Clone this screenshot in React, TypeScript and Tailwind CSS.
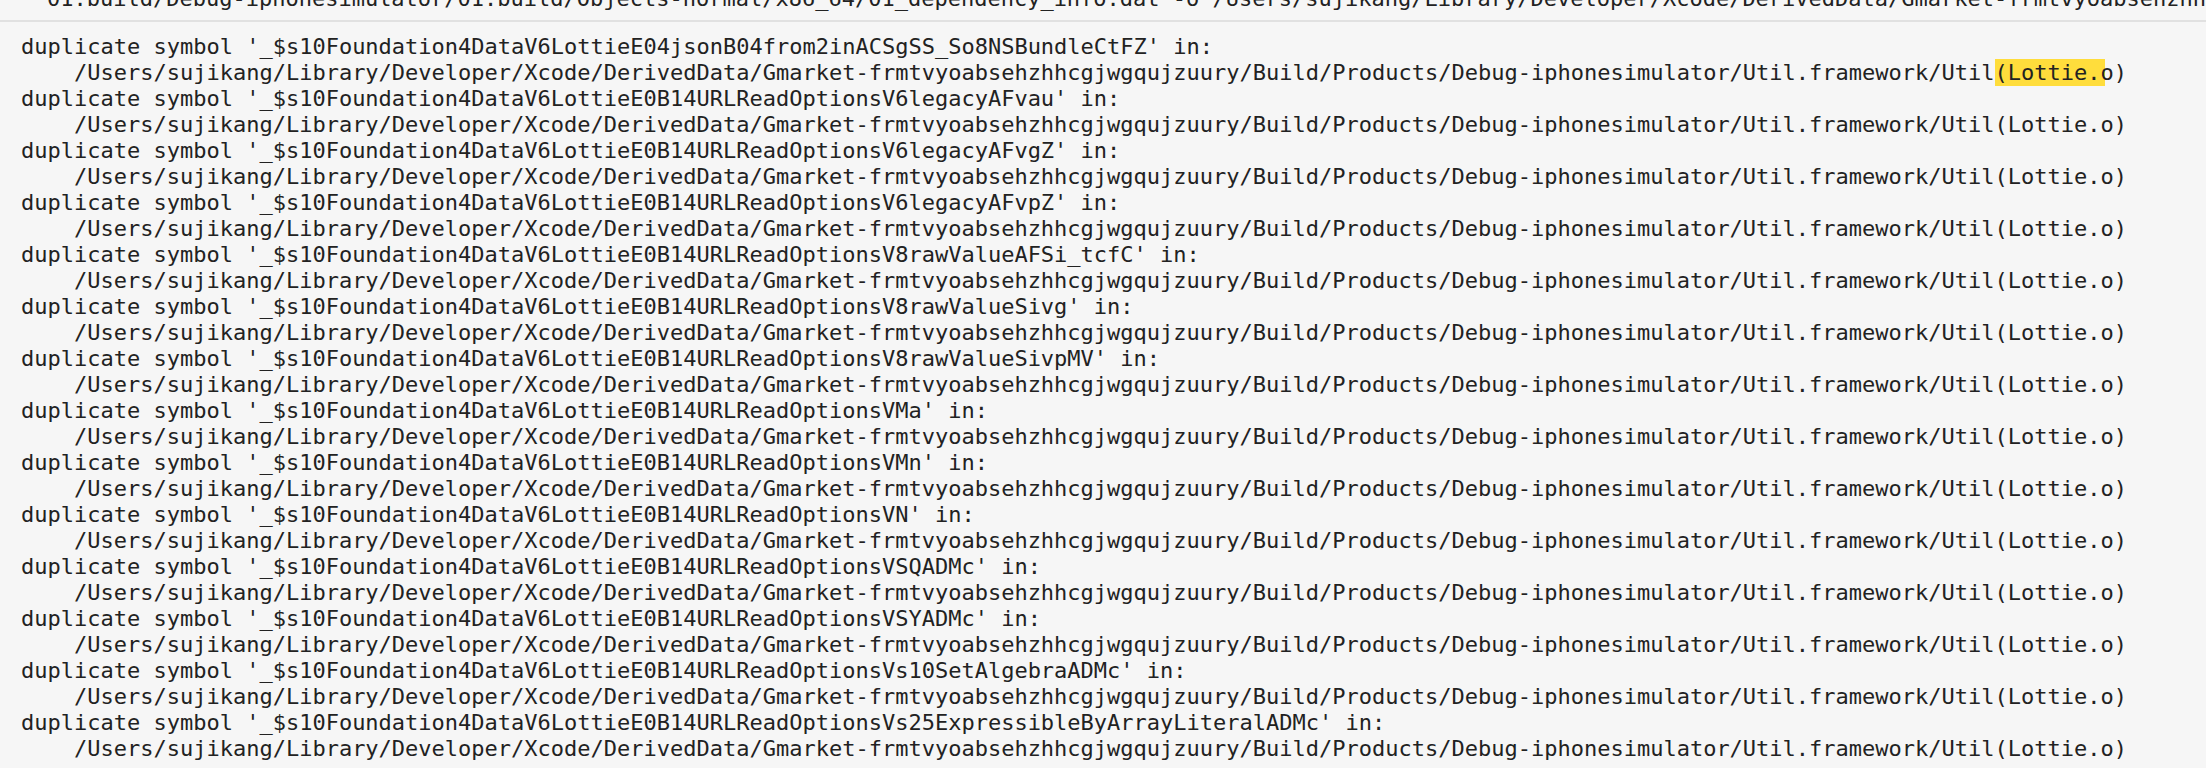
const PATH =
  "/Users/sujikang/Library/Developer/Xcode/DerivedData/Gmarket-frmtvyoabsehzhhcgjwgqujzuury/Build/Products/Debug-iphonesimulator/Util.framework/Util"

const PREFIX = "_$s10Foundation4DataV6LottieE0B14URLReadOptions"

const symbols = [
  "_$s10Foundation4DataV6LottieE04jsonB04from2inACSgSS_So8NSBundleCtFZ",
  PREFIX + "V6legacyAFvau",
  PREFIX + "V6legacyAFvgZ",
  PREFIX + "V6legacyAFvpZ",
  PREFIX + "V8rawValueAFSi_tcfC",
  PREFIX + "V8rawValueSivg",
  PREFIX + "V8rawValueSivpMV",
  PREFIX + "VMa",
  PREFIX + "VMn",
  PREFIX + "VN",
  PREFIX + "VSQADMc",
  PREFIX + "VSYADMc",
  PREFIX + "Vs10SetAlgebraADMc",
  PREFIX + "Vs25ExpressibleByArrayLiteralADMc",
]

const mono = "font-['DejaVu_Sans_Mono',monospace] text-[22px] leading-[26px] whitespace-pre"

export default function App() {
  return (
    <div className="w-[2206px] h-[768px] overflow-hidden bg-[#f6f6f6] text-[#222222]">
      {/* tail of the previous wrapped line, cut off by the top edge */}
      <div className="h-[22px] overflow-hidden border-b-2 border-[#e1e1e1]">
        <div className={`${mono} mt-[-14px] pl-[47px]`}>
          01.build/Debug-iphonesimulator/01.build/Objects-normal/x86_64/01_dependency_info.dat -o /Users/sujikang/Library/Developer/Xcode/DerivedData/Gmarket-frmtvyoabsehzhhcgjwgqujzuury/Build
        </div>
      </div>

      <div className={`${mono} pl-[21px] pt-[12px]`}>
        {symbols.map((s, i) => (
          <div key={i}>
            <div>{`duplicate symbol '${s}' in:`}</div>
            <div>
              {"    " + PATH}
              {i === 0 ? (
                <>
                  <span className="bg-[#ffdd3c] py-[1px] pr-[4px] mr-[-4px]">(Lottie.</span>
                  o)
                </>
              ) : (
                "(Lottie.o)"
              )}
            </div>
          </div>
        ))}
      </div>
    </div>
  )
}
